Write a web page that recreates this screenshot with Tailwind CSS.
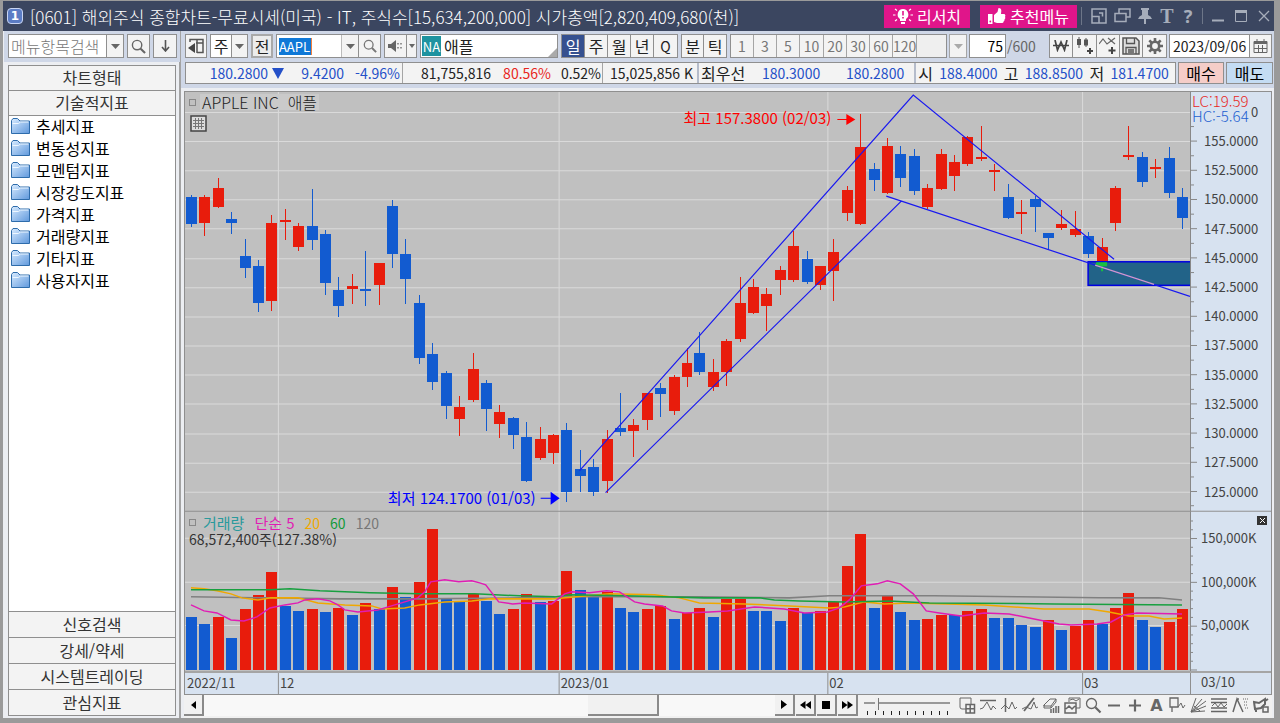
<!DOCTYPE html>
<html lang="ko">
<head>
<meta charset="utf-8">
<title>[0601] 해외주식 종합차트</title>
<script src="https://cdn.jsdelivr.net/npm/@tailwindcss/browser@4"></script>
</head>
<body class="flex h-screen flex-col overflow-hidden border-t border-r-[6px] border-b-[5px] border-l-[3px] border-[#9a9a9a] bg-[#eceef2] font-['Noto_Sans_CJK_KR',sans-serif] text-base leading-none text-[#222]">

<svg class="absolute size-0" aria-hidden="true">
  <defs>
    <symbol id="down" viewBox="0 0 10 6" preserveAspectRatio="none"><path d="M0 0h10L5 6z" fill="currentColor"/></symbol>
    <symbol id="search" viewBox="0 0 16 16"><g fill="none" stroke="currentColor"><circle cx="6.5" cy="6.5" r="5" stroke-width="1.5"/><path d="M10.3 10.3L15 15" stroke-width="2.2"/></g></symbol>
    <linearGradient id="fold" x1="0" y1="0" x2="1" y2="1"><stop offset="0" stop-color="#d8ebff"/><stop offset="1" stop-color="#5f98dc"/></linearGradient>
    <symbol id="folder" viewBox="0 0 19 16"><path d="M.5 2.5l1.500-2h4.500l2.500 2.500h9.500v12.500H.5z" fill="url(#fold)" stroke="#2e6cab"/><path d="M1.500 5.500h6l2-1.500h8" fill="none" stroke="#eef7ff"/></symbol>
  </defs>
</svg>

<header class="flex h-[30px] shrink-0 items-center bg-[#3b4660] pl-1 text-white">
  <span class="flex size-4 items-center justify-center rounded-sm border border-[#c9d5f2] bg-[#5b7cc4] font-['DejaVu_Sans'] text-xs font-bold">1</span>
  <h1 class="ml-[7px] flex-1 text-[17px] leading-none font-light whitespace-nowrap">[0601] 해외주식 종합차트-무료시세(미국) - IT, 주식수[15,634,200,000] 시가총액[2,820,409,680(천)]</h1>
  <button class="flex h-[23px] w-[86px] items-center justify-center gap-1 bg-[#e0158a]">
    <svg class="h-5 w-5" viewBox="0 0 20 20"><path d="M10 3a5.500 5.500 0 0 0-3 10v2h6v-2a5.500 5.500 0 0 0-3-10z" fill="#fff"/><path d="M8 16h4v2H8z" fill="#fff"/><path d="M10 5v4.500M10 11v1.500" stroke="#e0158a" stroke-width="1.600"/><path d="M0 9h2.500M17.500 9H20M2 3l2 1.500M18 3l-2 1.500M2 15l2-1.500M18 15l-2-1.500" stroke="#fff" stroke-width="1.200"/></svg>리서치</button>
  <button class="ml-[10px] flex h-[23px] w-[97px] items-center justify-center gap-1 bg-[#e0158a]">
    <svg class="h-4 w-[18px]" viewBox="0 0 18 16"><path d="M0 6h4.500v10H0zM6 7l3.500-3L10.500 0q3 0 2.800 3L13 6h3.500q1.500 1 .6 2.700.700 1.500-.5 2.500.200 1.500-1 2.200-.100 1.600-1.600 1.600H9l-3-1z" fill="#fff"/><circle cx="2.300" cy="13.500" r=".9" fill="#e0158a"/></svg>추천메뉴</button>
  <div class="ml-1 flex h-[18px] items-center gap-[7px] border-l border-[#6d7688] pl-[9px] text-[#a6adba]">
    <button aria-label="크기"><svg class="size-4" viewBox="0 0 16 16"><path d="M1 1h14v14H1zM1 8.500h7V15M8 5h3.500v3.500" fill="none" stroke="currentColor" stroke-width="1.500"/></svg></button>
    <button aria-label="복제"><svg class="h-4 w-[17px]" viewBox="0 0 17 16"><path d="M5 1h11v8H5z" fill="none" stroke="currentColor" stroke-width="1.500"/><path d="M1 5.500h11v8H1z" fill="#3b4660" stroke="currentColor" stroke-width="1.500"/></svg></button>
    <button aria-label="고정"><svg class="h-4 w-[14px]" viewBox="0 0 14 16"><path d="M3 0h8v2h-1v5q3 1 4 4H8v5H6v-5H0q1-3 4-4V2H3z" fill="currentColor"/></svg></button>
    <button aria-label="글꼴" class="w-4 font-['Liberation_Serif'] text-xl leading-none font-bold">T</button>
    <button aria-label="도움말" class="w-3 font-['Noto_Sans'] text-lg leading-none font-bold">?</button>
  </div>
  <div class="ml-2 flex h-4 items-center gap-[11px] border-l border-[#6d7688] pr-1 pl-[9px] text-[#a6adba]">
    <button aria-label="최소화"><svg class="h-3 w-3" viewBox="0 0 12 12"><path d="M0 10.500h12" stroke="currentColor" stroke-width="2"/></svg></button>
    <button aria-label="최대화"><svg class="h-3 w-3" viewBox="0 0 12 12"><path d="M.5 1h11v10.500H.5z" fill="none" stroke="currentColor"/><path d="M0 1.500h12" stroke="currentColor" stroke-width="3"/></svg></button>
    <button aria-label="닫기"><svg class="h-3 w-3" viewBox="0 0 12 12"><path d="M1 1l10 10M11 1L1 11" stroke="currentColor" stroke-width="1.300"/></svg></button>
  </div>
</header>

<div class="flex min-h-0 flex-1">
  <aside class="flex w-[178px] shrink-0 flex-col border-r-2 border-[#a3a3a3] pr-[3px] pl-[5px]">
    <form class="-mx-1 flex h-[31px] gap-[3px] bg-[#cfd7e7] pt-[3px] pr-[3px] pb-1 pl-1">
      <div class="flex min-w-0 flex-1 border border-[#8f8f8f] bg-white">
        <input aria-label="메뉴항목검색" placeholder="메뉴항목검색" class="min-w-0 flex-1 pl-[2px] font-light placeholder:text-[#777]">
        <button type="button" aria-label="열기" class="flex w-[17px] items-center justify-center border-l border-[#8f8f8f] bg-[#f3f3f3] text-[#666]"><svg class="h-[5px] w-[9px]"><use href="#down"/></svg></button>
      </div>
      <button type="button" aria-label="검색" class="flex w-[23px] items-center justify-center border border-[#8f8f8f] bg-[#f3f3f3] text-[#666]"><svg class="size-[15px]"><use href="#search"/></svg></button>
      <button type="button" aria-label="아래로" class="flex w-[24px] items-center justify-center border border-[#8f8f8f] bg-[#f3f3f3] text-[#555]"><svg class="h-3 w-[9px]" viewBox="0 0 9 12"><path d="M4.500 0v10M1 7l3.500 4L8 7" fill="none" stroke="currentColor" stroke-width="1.600"/></svg></button>
    </form>
    <nav class="mt-[3px] mb-[2px] flex min-h-0 flex-1 flex-col border border-[#8f8f8f] bg-white text-[#333]">
      <button class="h-[25px] border-b border-[#8f8f8f] bg-[#f3f3f3] pb-[2px]">차트형태</button>
      <button class="h-[25px] border-b border-[#8f8f8f] bg-[#f3f3f3] pb-[2px]">기술적지표</button>
      <ul class="flex-1 pl-[2px] text-black">
        <li><a href="#" class="flex h-[22px] items-center gap-[6px] pb-[2px]"><svg class="h-4 w-[19px]"><use href="#folder"/></svg>추세지표</a></li>
        <li><a href="#" class="flex h-[22px] items-center gap-[6px] pb-[2px]"><svg class="h-4 w-[19px]"><use href="#folder"/></svg>변동성지표</a></li>
        <li><a href="#" class="flex h-[22px] items-center gap-[6px] pb-[2px]"><svg class="h-4 w-[19px]"><use href="#folder"/></svg>모멘텀지표</a></li>
        <li><a href="#" class="flex h-[22px] items-center gap-[6px] pb-[2px]"><svg class="h-4 w-[19px]"><use href="#folder"/></svg>시장강도지표</a></li>
        <li><a href="#" class="flex h-[22px] items-center gap-[6px] pb-[2px]"><svg class="h-4 w-[19px]"><use href="#folder"/></svg>가격지표</a></li>
        <li><a href="#" class="flex h-[22px] items-center gap-[6px] pb-[2px]"><svg class="h-4 w-[19px]"><use href="#folder"/></svg>거래량지표</a></li>
        <li><a href="#" class="flex h-[22px] items-center gap-[6px] pb-[2px]"><svg class="h-4 w-[19px]"><use href="#folder"/></svg>기타지표</a></li>
        <li><a href="#" class="flex h-[22px] items-center gap-[6px] pb-[2px]"><svg class="h-4 w-[19px]"><use href="#folder"/></svg>사용자지표</a></li>
      </ul>
      <button class="h-[26px] border-t border-[#8f8f8f] bg-[#f3f3f3] pb-[2px]">신호검색</button>
      <button class="h-[26px] border-t border-[#8f8f8f] bg-[#f3f3f3] pb-[2px]">강세/약세</button>
      <button class="h-[26px] border-t border-[#8f8f8f] bg-[#f3f3f3] pb-[2px]">시스템트레이딩</button>
      <button class="h-[26px] border-t border-[#8f8f8f] bg-[#f3f3f3] pb-[2px]">관심지표</button>
    </nav>
  </aside>

  <main class="flex min-w-0 flex-1 flex-col pl-[3px]">
    <div class="-ml-[3px] flex h-[30px] shrink-0 items-stretch gap-[3px] border-l-4 border-[#cfd7e7] bg-[#cfd7e7] pt-[3px] pr-[2px] pb-[3px]">
      <button aria-label="목록 접기" class="flex w-[22px] items-center justify-center border border-[#8f8f8f] bg-[#f3f3f3]"><svg class="h-4 w-4" viewBox="0 0 16 16"><path d="M2 4V1.500h13v13H9M15 5H8M9 1v14" fill="none" stroke="#555" stroke-width="1.500"/><path d="M0 10l7-5v10z" fill="#444"/></svg></button>
      <div class="flex w-[38px] border border-[#8f8f8f] bg-white">
        <button class="flex-1">주</button>
        <button aria-label="주 열기" class="flex w-4 items-center justify-center border-l border-[#8f8f8f] bg-[#f3f3f3] text-[#666]"><svg class="h-[5px] w-[9px]"><use href="#down"/></svg></button>
      </div>
      <button class="w-[22px] border-2 border-[#a9a9a9] bg-[#ececec]">전</button>
      <div class="flex w-[105px] border border-[#8f8f8f] bg-white">
        <label class="flex flex-1 items-center pl-[2px]"><input aria-label="종목코드" value="AAPL" class="h-[17px] w-[33px] border-r border-[#f08040] bg-[#0f78d7] text-[13px] text-white"></label>
        <button aria-label="종목 열기" class="flex w-[17px] items-center justify-center border-l border-[#bbb] bg-[#f3f3f3] text-[#666]"><svg class="h-[5px] w-[9px]"><use href="#down"/></svg></button>
        <button aria-label="종목검색" class="flex w-[22px] items-center justify-center border-l border-[#8f8f8f] bg-[#f3f3f3] text-[#777]"><svg class="size-[14px]"><use href="#search"/></svg></button>
      </div>
      <div class="flex w-[33px] border border-[#8f8f8f] bg-[#f3f3f3]">
        <button aria-label="소리" class="flex flex-1 items-center justify-center"><svg class="h-3 w-4" viewBox="0 0 16 12"><path d="M0 4h3l5-4v12L3 8H0z" fill="#666"/><path d="M10 3v1.500M10 7v1.500M13 3v1.500M13 7v1.500" stroke="#777" stroke-width="1.500"/></svg></button>
        <button aria-label="소리 설정" class="flex w-[10px] items-center justify-center border-l border-[#8f8f8f] text-[#666]"><svg class="h-1 w-[6px]"><use href="#down"/></svg></button>
      </div>
      <div class="flex w-[138px] items-center gap-[3px] border border-[#8f8f8f] bg-white pl-px">
        <span class="flex h-5 w-[19px] items-center justify-center bg-[#1e93a0] text-[13px] text-white">NA</span>
        <span class="flex-1">애플</span>
        <svg class="size-[9px] self-end" viewBox="0 0 9 9"><path d="M9 0v9H0z" fill="#aaa"/></svg>
      </div>
      <div class="flex divide-x divide-[#8f8f8f] border border-[#8f8f8f] bg-[#f3f3f3]">
        <button class="w-[23px] bg-[#35508f] text-white">일</button>
        <button class="w-[23px]">주</button>
        <button class="w-[23px]">월</button>
        <button class="w-[23px]">년</button>
        <button class="w-[23px] text-sm">Q</button>
      </div>
      <div class="flex divide-x divide-[#8f8f8f] border border-[#8f8f8f] bg-[#f3f3f3]">
        <button class="w-[22px]">분</button>
        <button class="w-[22px]">틱</button>
      </div>
      <div class="flex divide-x divide-[#a5a5a5] border border-[#8f8f8f] bg-[#f3f3f3] text-sm leading-none text-[#777]">
        <button class="w-[23px]">1</button>
        <button class="w-[23px]">3</button>
        <button class="w-[23px]">5</button>
        <button class="w-[24px]">10</button>
        <button class="w-[23px]">20</button>
        <button class="w-[23px]">30</button>
        <button class="w-[23px]">60</button>
        <button class="w-[24px]">120</button>
        <input aria-label="직접입력" disabled class="w-[29px] bg-[#efefef]">
      </div>
      <button aria-label="분 선택" class="-ml-px flex w-[18px] items-center justify-center border border-[#a5a5a5] bg-[#f3f3f3] text-[#aaa]"><svg class="h-[5px] w-[9px]"><use href="#down"/></svg></button>
      <label class="-ml-px flex items-center text-sm leading-none text-[#666]"><input aria-label="조회개수" value="75" class="h-full w-[37px] border border-[#8f8f8f] bg-white pr-[2px] text-right text-black"><span class="pl-px">/600</span></label>
      <div class="ml-auto flex divide-x divide-[#8f8f8f] border border-[#8f8f8f] bg-[#f3f3f3]">
        <button aria-label="원화" class="flex w-[23px] items-center justify-center"><svg class="h-3 w-4" viewBox="0 0 16 12"><path d="M2 0l2.500 10L8 2l3.500 8L14 0M0 5.500h16" fill="none" stroke="#444" stroke-width="1.700"/></svg></button>
        <button aria-label="봉 추가" class="flex w-[24px] items-center justify-center"><svg class="h-[18px] w-[18px]" viewBox="0 0 18 18"><path d="M3 0v11M10 1v9" stroke="#555"/><path d="M1 2h4v6H1zM8 2.500h4v6H8z" fill="#555"/><path d="M14 11v6M11 14h6" stroke="#444" stroke-width="2"/></svg></button>
        <button aria-label="지표 추가" class="flex w-[23px] items-center justify-center"><svg class="h-[18px] w-[18px]" viewBox="0 0 18 18"><path d="M0 7l4-5 4 5 8-6M9 1l7 6" fill="none" stroke="#666" stroke-width="1.200"/><path d="M13 10v7M9.500 13.500h7" stroke="#444" stroke-width="2"/></svg></button>
        <button aria-label="저장" class="flex w-[23px] items-center justify-center"><svg class="size-[18px]" viewBox="0 0 18 18"><path d="M1 1h13l3 3v13H1z" fill="#ddd" stroke="#555" stroke-width="1.500"/><path d="M4.500 1v5.500h8V1M4 17v-6.500h10V17M6 13h6M6 15h6" fill="none" stroke="#555" stroke-width="1.300"/></svg></button>
        <button aria-label="설정" class="flex w-[23px] items-center justify-center"><svg class="size-4" viewBox="0 0 16 16"><circle cx="8" cy="8" r="4.200" fill="none" stroke="#666" stroke-width="2.600"/><path d="M8 0v3M8 13v3M0 8h3M13 8h3M2.300 2.300l2.200 2.200M11.500 11.500l2.200 2.200M2.300 13.700l2.200-2.200M11.500 4.500l2.200-2.200" stroke="#666" stroke-width="2.600"/></svg></button>
      </div>
      <div class="-ml-px flex border border-[#8f8f8f] bg-white">
        <input aria-label="조회일자" value="2023/09/06" class="w-[79px] pl-[3px] text-sm leading-none">
        <button aria-label="달력" class="flex w-[22px] items-center justify-center border-l border-[#8f8f8f] bg-[#f3f3f3]"><svg class="h-[14px] w-[15px]" viewBox="0 0 15 14"><path d="M1 2.500h13v11H1zM4 0v4M11 0v4M1 9.500h13M5.500 6v7M9.500 6v7" fill="none" stroke="#666"/><path d="M1 2h13v3H1z" fill="#666"/></svg></button>
      </div>
    </div>

    <div class="-ml-[3px] flex h-[27px] shrink-0 gap-[2px] border-b-[3px] border-l-4 border-[#cfd7e7] bg-[#cfd7e7] pt-px pr-px pb-px text-sm leading-none whitespace-nowrap text-[#2450c8]">
      <dl class="flex flex-1 items-center border border-[#8f8f8f] bg-[#f3f3f3]">
        <dd class="w-[82px] text-right">180.2800</dd>
        <dd class="w-4 pl-1"><svg class="h-[11px] w-3"><use href="#down"/></svg></dd>
        <dd class="w-[60px] text-right">9.4200</dd>
        <dd class="flex h-full w-[59px] items-center justify-end border-r border-[#a5a5a5] pr-[2px]">-4.96%</dd>
        <dd class="w-[88px] text-right text-[#222]">81,755,816</dd>
        <dd class="w-[60px] text-right text-[#e8261c]">80.56%</dd>
        <dd class="flex h-full w-[52px] items-center justify-end border-r border-[#a5a5a5] pr-px text-[#222]">0.52%</dd>
        <dd class="flex h-full w-[96px] items-center justify-end border-r-2 border-[#b5bccb] pr-1 text-[#222]">15,025,856 K</dd>
        <dt class="pl-[2px] text-base leading-none text-[#222]">최우선</dt>
        <dd class="w-[75px] text-right">180.3000</dd>
        <dd class="flex h-full w-[96px] items-center justify-end border-r-2 border-[#b5bccb] pr-[10px]">180.2800</dd>
        <dt class="pl-[2px] text-base leading-none text-[#222]">시</dt>
        <dd class="flex-1 text-center">188.4000</dd>
        <dt class="text-base leading-none text-[#222]">고</dt>
        <dd class="flex-1 text-center">188.8500</dd>
        <dt class="text-base leading-none text-[#222]">저</dt>
        <dd class="flex-1 text-center">181.4700</dd>
      </dl>
      <button class="w-[46px] border border-[#8f8f8f] bg-[#f5cdc8] text-base leading-none text-black">매수</button>
      <button class="w-[47px] border border-[#8f8f8f] bg-[#c4dcf3] text-base leading-none text-black">매도</button>
    </div>

    <section class="mt-[3px] mr-[2px] flex min-h-0 flex-1 flex-col border border-[#8f8f8f]">
      <div class="flex min-h-0 flex-1">
        <div class="relative min-w-0 flex-1 bg-[#c0c0c0]">
          <svg id="plot" class="block h-full w-full text-[15px]"></svg>
          <div class="absolute top-[2px] left-1 flex items-center gap-1 font-light text-[#222]"><i class="size-[7px] border border-[#888]"></i><span class="flex h-4 items-center bg-[#cacaca] px-[2px] whitespace-pre">APPLE INC  애플</span></div>
          <svg class="absolute top-[23px] left-[5px] size-[17px]" viewBox="0 0 17 17"><path d="M1 1h15v15H1z" fill="#ddd" stroke="#444" stroke-width="1.500"/><path d="M3 5.500h11M3 8.500h11M3 11.500h11M5.500 3v11M8.500 3v11M11.500 3v11" stroke="#777"/></svg>
          <div class="absolute top-[73%] left-1 text-sm leading-none text-[#333]">
            <div class="flex h-4 items-center gap-[6px]"><i class="mr-px size-[7px] border border-[#888]"></i><span class="text-[15px] leading-none text-[#2a9a9c]">거래량</span><span class="ml-1 text-[15px] leading-none text-[#e01cb4]">단순 5</span><span class="ml-1 text-[#f0a800]">20</span><span class="ml-1 text-[#109a38]">60</span><span class="ml-1 text-[#777]">120</span></div>
            <p class="flex h-4 items-center">68,572,400주(127.38%)</p>
          </div>
        </div>
        <div class="relative w-[81px] shrink-0 bg-[#d7e2f0]">
          <svg id="axis" class="block h-full w-full text-[13px] text-[#444]"></svg>
          <p class="absolute top-px left-[2px] text-[15px] leading-[15px] font-light text-[#e8261c]">LC:19.59<br><span class="text-[#1c5fd0]">HC:-5.64</span></p>
          <button aria-label="거래량 닫기" class="absolute top-[73%] right-1 mt-px flex h-[9px] w-[10px] items-center justify-center bg-[#333]"><svg class="size-[5px]" viewBox="0 0 5 5"><path d="M0 0l5 5M5 0L0 5" stroke="#fff"/></svg></button>
        </div>
      </div>
      <div class="flex h-[23px] shrink-0 border-t-2 border-[#a5a5a5] bg-[#d7e2f0] text-[13px] text-[#444]">
        <svg id="dates" class="h-full min-w-0 flex-1"></svg>
        <span class="flex w-[81px] items-center border-l border-[#8f8f8f] pb-1 pl-[10px]">03/10</span>
      </div>
    </section>

    <div class="mr-[2px] flex h-[23px] shrink-0 items-center bg-[#f1f1f1] pb-[2px]">
      <button aria-label="왼쪽" class="flex h-[21px] w-5 items-center justify-center border-r-2 border-b-2 border-[#8a8a8a]"><svg class="h-2 w-[5px]" viewBox="0 0 5 8"><path d="M5 0v8L0 4z"/></svg></button>
      <div role="scrollbar" aria-controls="plot" aria-valuenow="84" aria-label="기간 이동" class="flex h-full flex-1 bg-[#f8f8f8] pl-96"><div class="h-[21px] w-[71px] border-r-2 border-b-2 border-[#8a8a8a] bg-[#f1f1f1]"></div></div>
      <div class="flex gap-px">
        <button aria-label="재생" class="flex h-[21px] w-5 items-center justify-center border-r-2 border-b-2 border-[#8a8a8a]"><svg class="h-[9px] w-[6px]" viewBox="0 0 6 9"><path d="M0 0v9l6-4.500z"/></svg></button>
        <button aria-label="뒤로" class="flex h-[21px] w-5 items-center justify-center border-r-2 border-b-2 border-[#8a8a8a]"><svg class="h-2 w-[11px]" viewBox="0 0 11 8"><path d="M5.500 0v8L0 4zM11 0v8L5.500 4z"/></svg></button>
        <button aria-label="정지" class="flex h-[21px] w-5 items-center justify-center border-r-2 border-b-2 border-[#8a8a8a]"><i class="size-2 bg-black"></i></button>
        <button aria-label="앞으로" class="flex h-[21px] w-5 items-center justify-center border-r-2 border-b-2 border-[#8a8a8a]"><svg class="h-2 w-[11px]" viewBox="0 0 11 8"><path d="M0 0v8l5.500-4zM5.500 0v8L11 4z"/></svg></button>
      </div>
      <div class="ml-[6px] flex w-[86px] flex-col gap-px">
        <input type="range" aria-label="속도" min="0" max="100" value="14" class="h-[14px] w-full appearance-none bg-transparent [&::-webkit-slider-runnable-track]:h-[2px] [&::-webkit-slider-runnable-track]:bg-[#999] [&::-webkit-slider-thumb]:-mt-1 [&::-webkit-slider-thumb]:h-3 [&::-webkit-slider-thumb]:w-1 [&::-webkit-slider-thumb]:appearance-none [&::-webkit-slider-thumb]:border-r [&::-webkit-slider-thumb]:border-[#777] [&::-webkit-slider-thumb]:bg-[#eee]">
        <svg class="h-1 w-full"><path d="M3 2h82" stroke="#222" stroke-width="4" stroke-dasharray="1 7"/></svg>
      </div>
      <div class="ml-[7px] flex text-[#666]" id="tools"></div>
    </div>
  </main>
</div>

<script>
const UP = '#e81c0c', DOWN = '#125bd0';
// [rising, high, body top, body bottom, low, volume top]
const bars = [
[0,196,198,225,228,617],[1,196,198,224,237,624],[1,179,189,208,209,617],[0,213,220,224,235,638],[0,240,257,269,279,609],[0,261,267,304,313,595],[1,216,224,302,312,572],[1,210,221,223,241,606],[1,224,227,248,252,611],[0,190,227,241,251,609],
[0,231,235,284,296,612],[0,278,291,307,318,608],[1,275,287,290,305,615],[0,252,290,292,307,603],[1,264,264,286,306,609],[0,201,207,255,269,587],[0,240,255,280,305,597],[0,296,304,359,365,582],[0,344,355,382,390,529],[0,372,374,406,419,599],
[1,396,407,419,436,602],[1,354,370,400,402,594],[0,381,383,409,431,601],[1,405,412,424,438,614],[0,417,418,435,449,609],[0,422,437,481,482,594],[1,427,439,458,460,602],[1,434,435,453,464,601],[0,423,430,492,502,571],[0,450,469,476,492,590],
[0,459,467,492,496,596],[1,430,439,481,493,592],[0,393,428,432,436,608],[1,419,425,431,457,612],[1,393,393,420,430,609],[0,383,388,394,417,606],[1,376,378,411,415,619],[1,349,364,378,387,613],[0,333,354,373,376,608],[1,360,373,387,391,617],
[1,340,342,373,386,599],[1,278,304,340,343,599],[1,280,288,314,315,611],[1,289,295,307,332,611],[1,267,271,281,296,621],[1,232,247,281,283,608],[0,252,260,283,285,613],[1,267,267,286,291,611],[1,240,253,272,302,602],[1,187,191,214,222,566],
[1,115,148,225,226,534],[0,164,170,181,192,608],[1,139,147,194,195,596],[0,147,155,179,188,612],[0,150,157,192,196,620],[1,185,189,208,210,619],[1,150,155,190,191,615],[1,156,163,177,192,615],[1,137,138,165,167,611],[1,127,158,160,162,609],
[1,165,171,173,192,618],[0,185,198,219,220,618],[1,201,213,215,235,625],[0,197,200,208,233,627],[0,234,234,239,250,620],[1,211,225,229,231,630],[1,212,230,236,238,626],[0,233,237,255,259,620],[1,239,248,262,264,624],[1,187,189,224,232,608],
[1,127,156,158,161,593],[0,153,158,183,188,620],[1,160,168,169,179,627],[0,148,159,194,199,622],[0,189,198,219,230,609]];
const volumeRising = [0,0,1,0,1,1,1,0,0,1,0,1,0,1,0,1,0,1,1,0,0,1,0,0,1,1,0,1,1,0,0,1,0,0,1,1,0,1,1,0,1,1,0,0,0,1,0,1,1,1,1,0,1,0,0,1,1,0,1,1,0,0,0,0,1,0,1,1,0,1,1,0,0,1,1];
const L = 185, T = 93, W = 1006, H = 578;
const px = v => ((v - L) / W * 100).toFixed(3) + '%';
const py = v => ((v - T) / H * 100).toFixed(3) + '%';
const priceY = i => 142 + 29.15 * i;
const months = [[185,'2022/11'],[278,'12'],[559,'2023/01'],[828,'02'],[1083,'03']];

let s = '<g stroke="#dadada" shape-rendering="crispEdges">';
for (let i = -1; i < 13; i++) s += `<path d="M185 ${Math.round(priceY(i))}.5h1006"/>`;
for (const y of [538, 582, 625]) s += `<path d="M185 ${y}.5h1006"/>`;
for (const [x] of months.slice(1)) s += `<path d="M${x}.5 93v578"/>`;
s += '</g><path d="M185 511.5h1006" stroke="#8f8f8f" shape-rendering="crispEdges"/><g shape-rendering="crispEdges">';
bars.forEach(([up, hi, a, b, lo, v], i) => {
  const x = Math.round(191 + 13.405 * i), c = up ? UP : DOWN;
  s += `<rect x="${x}" y="${hi}" width="1" height="${lo - hi}" fill="${c}"/><rect x="${x - 5}" y="${a}" width="11" height="${Math.max(2, b - a)}" fill="${c}"/><rect x="${x - 5}" y="${v}" width="11" height="${670 - v}" fill="${volumeRising[i] ? UP : DOWN}"/>`;
});
s += '</g>';
s += '<rect x="1089" y="262.500" width="103" height="23.500" fill="#226388" stroke="#0000e0" stroke-width="1.500"/><path d="M1097 263h11v4h-4v5h-2v-5h-5z" fill="#18c040"/>';
s += '<g fill="none" stroke="#1818f0" stroke-width="1.200"><path d="M580 471L914 96L1115 260M606 493L902 202M887 197L1191 297"/></g><path d="M1096 265.800L1155 285" stroke="#d0a0c0" stroke-width="1.300"/>';
const line = (c, p) => s += `<polyline fill="none" stroke="${c}" stroke-width="1.500" points="${p}"/>`;
line('#808080', '191,597 270,598 340,599 420,599 520,598 565,597 700,597 790,598 830,596 935,596 1020,597 1100,598 1160,598 1183,600');
line('#f0a800', '191,588 204,589 217,591 231,594 242,598 258,600 271,598 298,598 318,603 345,605 372,606 382,609 405,608 420,605 445,602 472,601 490,599 552,599 566,598 610,594 655,595 680,598 700,603 745,604 790,606 830,608 845,607 865,602 885,604 910,603 985,605 1045,609 1090,609 1110,612 1130,616 1150,616 1165,619 1183,618');
line('#18a040', '191,590 270,590 290,589 320,591 370,593 420,594 475,594 520,596 555,597 570,595 625,596 705,598 760,598 775,600 800,601 845,602 890,601 930,603 1055,604 1183,605');
line('#e01cb4', '191,605 204,611 217,613 231,620 244,621 257,617 270,608 285,605 298,603 305,600 318,599 330,601 338,605 345,610 358,612 378,610 385,608 405,602 418,598 425,592 431,582 445,580 459,582 472,581 480,583 486,585 499,602 513,604 525,603 552,604 565,594 572,592 590,593 607,591 620,592 635,602 645,604 663,606 672,611 685,613 710,612 728,611 755,607 785,609 805,613 828,612 840,608 850,600 862,586 878,584 888,581 901,584 914,594 927,611 940,613 962,616 985,613 1010,614 1035,619 1060,624 1072,625 1098,624 1112,622 1125,615 1138,613 1183,614');
s += '<path d="M838 120h9v-5l9 5.500-9 5.500v-5h-9z" fill="#f00"/><path d="M541 498h10v-6l9 6.500-9 6.500v-6h-10z" fill="#00f"/>';
document.getElementById('plot').innerHTML =
  `<svg width="100%" height="100%" viewBox="185 93 1006 578" preserveAspectRatio="none">${s}</svg>` +
  `<text x="${px(832)}" y="${py(125)}" text-anchor="end" fill="#f00">최고 157.3800 (02/03)</text><text x="${px(536)}" y="${py(504)}" text-anchor="end" fill="#00f">최저 124.1700 (01/03)</text>`;

let a = '';
const tick = (y, w) => a += `<line x1="0" x2="${w}" y1="${py(y)}" y2="${py(y)}" stroke="#888"/>`;
a += `<line x1="0.5" x2="0.5" y1="0" y2="100%" stroke="#888"/><text x="61" y="${py(118)}" fill="currentColor">0</text>`;
for (let i = 0; i < 13; i++) {
  tick(priceY(i), 7); tick(priceY(i) - 14.5, 4);
  a += `<text x="14" y="${py(priceY(i) + 5)}" fill="currentColor">${(155 - 2.5 * i).toFixed(4)}</text>`;
}
tick(506, 4);
for (let i = 0; i < 18; i++) tick(670 - i * 8.75, i % 5 ? 3 : 7);
[[538,'150,000K'],[582,'100,000K'],[625,'50,000K']].forEach(([y, t]) => a += `<text x="11" y="${py(y + 5)}" fill="currentColor">${t}</text>`);
a += `<line x1="0" x2="100%" y1="${py(511.5)}" y2="${py(511.5)}" stroke="#8f8f8f"/>`;
document.getElementById('axis').innerHTML = a;

document.getElementById('dates').innerHTML = months.map(([x, t], i) =>
  (i ? `<line x1="${px(x + 0.5)}" x2="${px(x + 0.5)}" y1="0" y2="100%" stroke="#8f8f8f"/>` : '') + `<text x="${px(x + 2)}" y="15" fill="currentColor">${t}</text>`).join('');

const tools = [
['구역','<path d="M1 1h11v6M7 12H3q-2 0-2-2V1" /><path d="M7 7.500h8.500V16H7zM11.200 7.500V16M7 11.700h8.500" stroke-width="1.500"/>'],
['수평선','<path d="M0 3.500h16" stroke-width="1.500"/><path d="M0 12l3-1 4-6 4 8 2-4 3 3"/>'],
['수직선','<path d="M4.500 1v14" stroke-width="1.500"/><path d="M0 12l4-4 4 4 3-7 3 7 2-2"/>'],
['추세선','<path d="M2 14L12 1" stroke-width="1.800"/><path d="M0 12l4-2 5 2 3-7 2 6 2-1"/>'],
['전체삭제','<path d="M1 8l6-6h6l-5 7H1zM1 8v3h7V9M8 11l5-6V2"/><path d="M8 16v-4M10.500 16v-5M13 16V9M15.500 16V9" stroke-width="1.500"/>'],
['차트비교','<path d="M5 5V1h11v10h-4M6 3l3-1 3 2 3-2"/><path d="M1 6h11v10H1zM2 12l3-3 3 3 3-3" stroke-width="1.500"/>'],
['돋보기','<circle cx="6.500" cy="6.500" r="5" stroke-width="1.300"/><path d="M10.300 10.300L15.500 15.500" stroke-width="2.200"/>'],
['축소','<path d="M2 8.500h12" stroke-width="2"/>'],
['확대','<path d="M2 8.500h12M8 2.500v12" stroke-width="2.200"/>'],
['자동','A'],
['영역','<path d="M1 1h8v9H1zM3 10v5" stroke-width="1.300"/><path d="M9 10l3-4 2 5 2-3"/>'],
['팬','<path d="M1 15L6 1M1 15L12 2M1 15L16 4M1 15L16 9M1 15L15 14M4 9l6 5"/>'],
['패턴','<path d="M0 2h16M0 14.500h16M0 5.500h16M0 11h16" stroke-width="1.500"/><path d="M1 9l3-3 3 4 3-4 3 4 3-3"/>'],
['분석','<path d="M1 15L5 2l6 13M5 2h2" stroke-width="1.500"/><path d="M11 2h5M12 5h4M12 8h4M13 11h3" stroke-dasharray="1 1"/>'],
['알림','<path d="M1 5l5 1 6-4v5l-4 4-6 1zM3 11v4M12 4l3-2" stroke-width="2"/><path d="M10 10h5v5h-5z" stroke-width="1.500"/>']];
document.getElementById('tools').innerHTML = tools.map(([n, d]) =>
  `<button aria-label="${n}" class="flex w-[21px] items-center justify-center">` + (d === 'A' ? '<b class="font-[\'DejaVu_Sans\']">A</b>' : `<svg class="size-[17px]" viewBox="0 0 17 17" fill="none" stroke="currentColor">${d}</svg>`) + '</button>').join('');
</script>
</body>
</html>
